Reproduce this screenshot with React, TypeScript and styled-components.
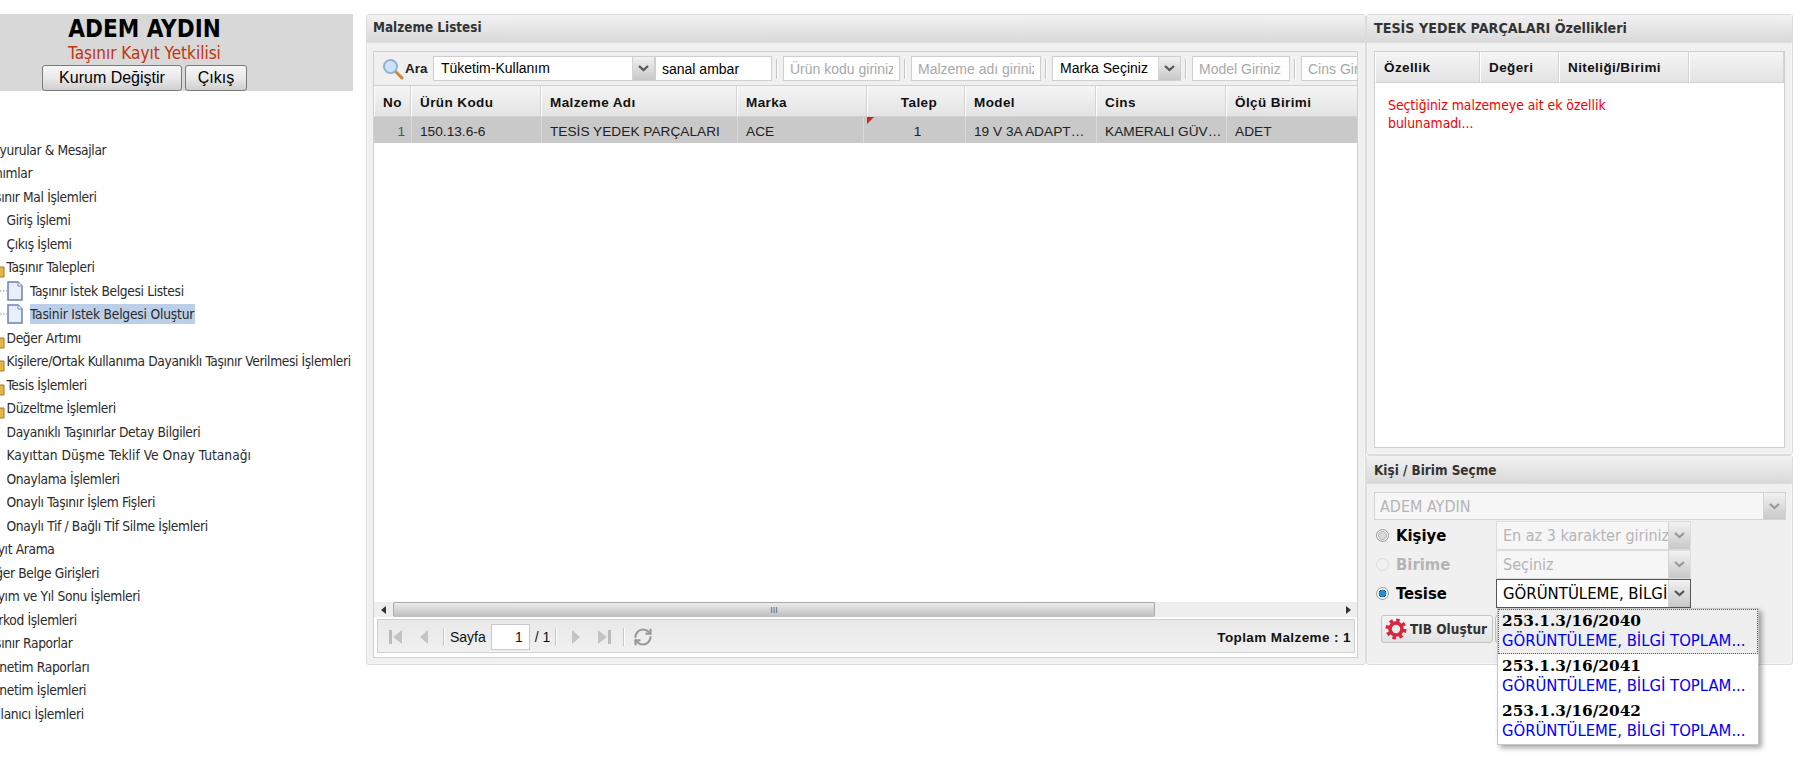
import React from "react";
import styled, { createGlobalStyle } from "styled-components";
import { RefreshCw } from "lucide-react";

const Global = createGlobalStyle`
  html, body { margin: 0; padding: 0; background: #fff; overflow: hidden; }
  * { box-sizing: border-box; }
`;
const tahoma = `"DejaVu Sans", "Noto Sans", sans-serif`;
const arial = `"Liberation Sans", Arial, sans-serif`;

const Page = styled.div`
  display: flex;
  width: 1803px;
  height: 771px;
  padding-top: 14px;
  overflow: hidden;
`;
const Aside = styled.aside`
  width: 353px;
  flex: none;
  overflow: hidden;
  margin-right: 13px;
`;
const UserCard = styled.div`
  height: 77px;
  background: #d8d8d8;
  padding-right: 64px;
  display: flex;
  flex-direction: column;
  align-items: center;
`;
const UserName = styled.div`
  font: bold 24px/28px ${tahoma};
  font-stretch: condensed;
  color: #000;
  margin-top: 1px;
`;
const UserRole = styled.div`
  font: 17px/20px ${tahoma};
  font-stretch: condensed;
  color: #c0330f;
`;
const UserActions = styled.div`
  display: flex;
  gap: 3px;
  margin-top: 2px;
`;
const PlainButton = styled.button<{ $w: number }>`
  width: ${(p) => p.$w}px;
  height: 26px;
  padding: 0;
  border: 1px solid #7a7a7a;
  border-radius: 3px;
  background: linear-gradient(#f6f6f6, #e9e9e9 50%, #cfcfcf);
  font: 16px ${arial};
  color: #000;
`;
const Tree = styled.div`
  margin-top: 47px;
`;
const Row = styled.div<{ $level: number; $track: number }>`
  height: 23.5px;
  display: flex;
  align-items: center;
  white-space: nowrap;
  margin-left: ${(p) => p.$level * 23.5 - 17}px;
  font: 13.7px/20px ${tahoma};
  font-stretch: condensed;
  letter-spacing: ${(p) => p.$track}px;
  color: #2b2b2b;
`;
const Label = styled.span<{ $selected?: boolean }>`
  padding-right: 1px;
  background: ${(p) => (p.$selected ? "#bccfe9" : "transparent")};
`;
const FolderSlot = styled.svg`
  flex: none;
  width: 18px;
  height: 16px;
  margin-left: -20px;
  margin-right: 2px;
  margin-top: 6px;
`;
const DocSlot = styled.svg`
  flex: none;
  width: 25px;
  height: 20px;
  margin-left: -30px;
  margin-right: 5px;
`;

const Panel = styled.section`
  display: flex;
  flex-direction: column;
  border: 1px solid #dcdcdc;
  border-radius: 3px;
  background: #f0f0f0;
  box-shadow: inset 0 0 0 1px #f5f5f5;
`;
const MainPanel = styled(Panel)`
  width: 1000px;
  height: 651px;
  flex: none;
  padding-bottom: 6px;
`;
const PanelHead = styled.header<{ $size?: number }>`
  height: 28px;
  flex: none;
  padding: 0 0 2px 6px;
  display: flex;
  align-items: center;
  background: linear-gradient(#f2f2f2, #d9d9d9);
  border-bottom: 1px solid #dcdcdc;
  font: bold ${(p) => p.$size ?? 13.4}px ${tahoma};
  font-stretch: condensed;
  color: #333;
`;
const AttrHead = styled(PanelHead)`
  padding-left: 7px;
`;
const PickHead = styled(PanelHead)`
  padding: 2px 0 0 7px;
`;
const GridBox = styled.div`
  flex: 1;
  margin: 8px 7px 0 6px;
  border: 1px solid #d0d0d0;
  background: #fff;
  display: flex;
  flex-direction: column;
  overflow: hidden;
`;
const Toolbar = styled.div`
  height: 34px;
  flex: none;
  background: #f0f0f0;
  border-bottom: 1px solid #d0d0d0;
  display: flex;
  align-items: center;
  padding-left: 8px;
  overflow: hidden;
`;
const SearchIcon = styled.svg`
  flex: none;
  width: 22px;
  height: 22px;
`;
const SearchLabel = styled.span`
  flex: none;
  width: 29px;
  padding-left: 1px;
  font: bold 13.5px ${arial};
  color: #222;
`;
const Field = styled.input<{ $w: number }>`
  width: ${(p) => p.$w}px;
  height: 25px;
  flex: none;
  border: 1px solid #cfcfcf;
  padding: 0 6px;
  margin: 0;
  background: #fff;
  outline: none;
  font: 14px ${arial};
  color: #000;
  &::placeholder { color: #a8a8a8; opacity: 1; }
`;
const Combo = styled.div<{ $w: number }>`
  position: relative;
  width: ${(p) => p.$w}px;
  height: 25px;
  flex: none;
  display: flex;
  border: 1px solid #cfcfcf;
  background: #fff;
  font: 14px/23px ${arial};
  color: #000;
  padding-left: 7px;
  justify-content: space-between;
`;
const Trigger = styled.span`
  width: 22px;
  flex: none;
  background: linear-gradient(#f2f2f2, #c8c8c8);
  border-left: 1px solid #d4d4d4;
  display: flex;
  align-items: center;
  justify-content: center;
`;
const Sep = styled.span`
  flex: none;
  width: 2px;
  height: 20px;
  background: #c6c6c6;
  border-right: 1px solid #fff;
  margin: 0 5px 0 4px;
`;
const Columns = styled.div<{ $cols: string; $h: number }>`
  display: grid;
  grid-template-columns: ${(p) => p.$cols};
  height: ${(p) => p.$h}px;
  flex: none;
`;
const HeadCell = styled.div<{ $center?: boolean; $shift?: number }>`
  display: flex;
  align-items: center;
  justify-content: ${(p) => (p.$center ? "center" : "flex-start")};
  padding: 3px 0 0 ${(p) => p.$shift ?? (p.$center ? 0 : 8)}px;
  background: linear-gradient(#f5f5f5, #e3e3e3);
  border-right: 1px solid #d4d4d4;
  border-left: 1px solid #fff;
  border-bottom: 1px solid #d0d0d0;
  font: bold 13.5px ${arial};
  letter-spacing: 0.4px;
  color: #111;
`;
const AttrHeadCell = styled(HeadCell)`
  padding-top: 0;
`;
const Cell = styled.div<{ $center?: boolean; $right?: boolean }>`
  position: relative;
  display: flex;
  align-items: center;
  justify-content: ${(p) => (p.$center ? "center" : p.$right ? "flex-end" : "flex-start")};
  padding: ${(p) => (p.$right ? "2px 6px 0 0" : p.$center ? "2px 0 0 6px" : "2px 0 0 8px")};
  overflow: hidden;
  background: #c9c9c9;
  border-right: 1px solid #dadada;
  font: 13.7px ${arial};
  color: ${(p) => (p.$right ? "#555" : "#222")};
  white-space: nowrap;
`;
const Dirty = styled.i`
  position: absolute;
  left: 3px;
  top: 0;
  width: 0;
  height: 0;
  border-top: 7px solid #d0202a;
  border-right: 7px solid transparent;
`;
const Empty = styled.div`
  flex: 1;
  background: #fff;
`;
const HScroll = styled.div`
  height: 15px;
  flex: none;
  background: #eeeeee;
  display: flex;
  align-items: stretch;
  margin-bottom: 2px;
`;
const ScrollEnd = styled.div`
  width: 19px;
  flex: none;
  display: flex;
  align-items: center;
  justify-content: center;
`;
const ScrollThumb = styled.div`
  width: 762px;
  flex: none;
  background: linear-gradient(#ececec, #bcbcbc);
  border: 1px solid #a8a8a8;
  border-bottom: 0;
  border-radius: 2px;
  display: flex;
  align-items: center;
  justify-content: center;
  font: 9px ${arial};
  color: #666;
`;
const ScrollRest = styled.div`
  flex: 1;
`;
const Pager = styled.div`
  height: 34px;
  flex: none;
  margin: 0 2px 4px 3px;
  border: 1px solid #d0d0d0;
  background: linear-gradient(#e9e9e9, #f0f0f0);
  display: flex;
  align-items: center;
  padding: 2px 3px 0 4px;
  font: 14px ${arial};
  color: #111;
`;
const PagerSep = styled.span<{ $gap?: number }>`
  flex: none;
  width: 2px;
  height: 18px;
  background: #c6c6c6;
  border-right: 1px solid #fff;
  margin: 0 ${(p) => p.$gap ?? 5}px 0 5px;
`;
const PageIcon = styled.svg`
  flex: none;
  width: 16px;
  height: 16px;
  margin: 0 6px;
`;
const PageInput = styled.input`
  width: 39px;
  height: 26px;
  margin: 0 5px 0 5px;
  padding: 0 6px;
  border: 1px solid #c8c8c8;
  outline: none;
  background: #fff;
  text-align: right;
  font: 14px ${arial};
  color: #111;
`;
const Total = styled.span`
  margin-left: auto;
  font: bold 13.5px ${arial};
  letter-spacing: 0.4px;
  color: #111;
`;

const RightColumn = styled.div`
  width: 427px;
  height: 651px;
  flex: none;
  display: flex;
  flex-direction: column;
`;
const AttrPanel = styled(Panel)`
  height: 441px;
  flex: none;
`;
const AttrBox = styled(GridBox)`
  margin: 8px 7px 6px 7px;
`;
const AttrMessage = styled.div`
  padding: 13px 0 0 13px;
  font: 13.8px/18px ${tahoma};
  font-stretch: condensed;
  color: #f00000;
`;
const PickPanel = styled(Panel)`
  flex: 1;
`;
const PickBody = styled.div`
  flex: 1;
  padding: 8px 6px 0 7px;
`;
const WideSelect = styled(Combo)`
  width: 412px;
  height: 28px;
  margin-bottom: 1px;
  background: #f6f6f6;
  border-color: #d4d4d4;
  font: 16px/28px ${tahoma};
  font-stretch: condensed;
  color: #b5b5b5;
  padding-left: 5px;
`;
const ChoiceRow = styled.div`
  display: flex;
  align-items: center;
  height: 29px;
`;
const Radio = styled.span<{ $on?: boolean; $off?: boolean }>`
  flex: none;
  width: 13px;
  height: 13px;
  margin-left: 2px;
  border-radius: 50%;
  border: 1px solid ${(p) => (p.$off ? "#dcdcdc" : "#9a9a9a")};
  background: ${(p) =>
    p.$on
      ? "radial-gradient(circle, #2a8fd0 0 3px, #10456e 3.6px, #fff 4.2px, #e8e8e8 100%)"
      : p.$off
      ? "#f0f0f0"
      : "radial-gradient(circle, #d8d8d8 0 3px, #bdbdbd 4px, #f6f6f6 5px)"};
`;
const ChoiceLabel = styled.span<{ $off?: boolean }>`
  width: 107px;
  flex: none;
  padding-left: 7px;
  font: bold 16.5px ${tahoma};
  font-stretch: condensed;
  color: ${(p) => (p.$off ? "#b5b5b5" : "#000")};
`;
const ChoiceCombo = styled.div<{ $active?: boolean }>`
  position: relative;
  width: 195px;
  height: 29px;
  flex: none;
  display: flex;
  border: 1px solid ${(p) => (p.$active ? "#555" : "#dcdcdc")};
  background: ${(p) => (p.$active ? "#fff" : "#f6f6f6")};
`;
const ChoiceInput = styled.input<{ $active?: boolean }>`
  flex: 1;
  min-width: 0;
  border: 0;
  outline: none;
  background: transparent;
  padding: 0 0 0 6px;
  font: ${(p) => (p.$active ? 16.6 : 16)}px ${tahoma};
  font-stretch: condensed;
  color: ${(p) => (p.$active ? "#000" : "#b5b5b5")};
  &::placeholder { color: #b5b5b5; opacity: 1; }
`;
const Dropdown = styled.div`
  position: absolute;
  left: 0;
  top: 28px;
  width: 262px;
  background: #fff;
  border: 1px solid #c8c8c8;
  box-shadow: 3px 3px 5px rgba(0, 0, 0, 0.35);
  z-index: 5;
`;
const DropItem = styled.div<{ $active?: boolean }>`
  height: 45px;
  padding: 2px 0 0 4px;
  background: ${(p) => (p.$active ? "#eeeeee" : "#fff")};
  outline: ${(p) => (p.$active ? "1px dotted #555" : "none")};
  outline-offset: -1px;
`;
const DropCode = styled.div`
  font: bold 15.3px/20px "DejaVu Serif", "Liberation Serif", serif;
  color: #000;
`;
const DropName = styled.div`
  font: 16.5px/19px ${tahoma};
  font-stretch: condensed;
  color: #0000f0;
  white-space: nowrap;
`;
const ActionRow = styled.div`
  display: flex;
  gap: 2px;
  margin: 7px 0 0 7px;
`;
const IconButton = styled.button<{ $w: number }>`
  width: ${(p) => p.$w}px;
  height: 28px;
  padding: 0 0 0 3px;
  display: flex;
  align-items: center;
  gap: 3px;
  border: 1px solid #c4c4c4;
  border-radius: 3px;
  background: linear-gradient(#f6f6f6, #e2e2e2);
  font: bold 13.5px ${tahoma};
  font-stretch: condensed;
  color: #333;
  white-space: nowrap;
  overflow: hidden;
`;

const Chevron = ({ light }: { light?: boolean }) => (
  <svg width="11" height="7" viewBox="0 0 11 7">
    <polyline points="1,1 5.5,5 10,1" fill="none" stroke={light ? "#999" : "#555"} strokeWidth="2.2" />
  </svg>
);
const Folder = () => (
  <FolderSlot viewBox="0 0 18 16">
    <path d="M1 3h6l2 2h8v10H1z" fill="#e3b54a" stroke="#a9791c" />
  </FolderSlot>
);
const Doc = () => (
  <DocSlot viewBox="0 0 25 20">
    <line x1="0" y1="10" x2="7" y2="10" stroke="#999" strokeDasharray="1.5 1.5" />
    <path d="M8 1h10l4 4v14H8z" fill="#e6effb" stroke="#6f83ae" strokeWidth="1.5" />
    <path d="M18 1v4h4" fill="#fff" stroke="#6f83ae" />
  </DocSlot>
);
const Magnifier = () => (
  <SearchIcon viewBox="0 0 22 22">
    <line x1="13" y1="13" x2="20" y2="20" stroke="#c98a3b" strokeWidth="3" strokeLinecap="round" />
    <circle cx="8.5" cy="8.5" r="6.5" fill="#cfe3f7" stroke="#8fb2d3" strokeWidth="2" />
  </SearchIcon>
);
const Gear = () => (
  <svg width="22" height="22" viewBox="0 0 22 22">
    <circle cx="11" cy="11" r="8.8" fill="none" stroke="#d8263c" strokeWidth="3.4" strokeDasharray="3.45 3.46" />
    <circle cx="11" cy="11" r="6" fill="none" stroke="#d8263c" strokeWidth="3.6" />
  </svg>
);

type Node = { level: number; text: string; kind?: "folder" | "doc" | "selected"; track?: number };
const tree: Node[] = [
  { level: 0, text: "Duyurular & Mesajlar" },
  { level: 0, text: "Tanımlar" },
  { level: 0, text: "Taşınır Mal İşlemleri" },
  { level: 1, text: "Giriş İşlemi" },
  { level: 1, text: "Çıkış İşlemi" },
  { level: 1, text: "Taşınır Talepleri", kind: "folder" },
  { level: 2, text: "Taşınır İstek Belgesi Listesi", kind: "doc" },
  { level: 2, text: "Tasinir Istek Belgesi Oluştur", kind: "selected", track: -0.2 },
  { level: 1, text: "Değer Artımı", kind: "folder" },
  { level: 1, text: "Kişilere/Ortak Kullanıma Dayanıklı Taşınır Verilmesi İşlemleri", kind: "folder", track: -0.38 },
  { level: 1, text: "Tesis İşlemleri", kind: "folder" },
  { level: 1, text: "Düzeltme İşlemleri", kind: "folder" },
  { level: 1, text: "Dayanıklı Taşınırlar Detay Bilgileri" },
  { level: 1, text: "Kayıttan Düşme Teklif Ve Onay Tutanağı", track: 0 },
  { level: 1, text: "Onaylama İşlemleri" },
  { level: 1, text: "Onaylı Taşınır İşlem Fişleri" },
  { level: 1, text: "Onaylı Tif / Bağlı Tİf Silme İşlemleri" },
  { level: 0, text: "Kayıt Arama" },
  { level: 0, text: "Diğer Belge Girişleri" },
  { level: 0, text: "Sayım ve Yıl Sonu İşlemleri" },
  { level: 0, text: "Barkod İşlemleri" },
  { level: 0, text: "Taşınır Raporlar" },
  { level: 0, text: "Denetim Raporları" },
  { level: 0, text: "Denetim İşlemleri" },
  { level: 0, text: "Kullanıcı İşlemleri" },
];

const headCols = "37px 130px 196px 130px 98px 131px 130px 132px";
const rowCols = "38px 130px 196px 126px 102px 131px 130px 131px";

export default function App() {
  return (
    <Page>
      <Global />
      <Aside>
        <UserCard>
          <UserName>ADEM AYDIN</UserName>
          <UserRole>Taşınır Kayıt Yetkilisi</UserRole>
          <UserActions>
            <PlainButton $w={140}>Kurum Değiştir</PlainButton>
            <PlainButton $w={62}>Çıkış</PlainButton>
          </UserActions>
        </UserCard>
        <Tree>
          {tree.map(({ level, text, kind, track }) => (
            <Row key={text} $level={level} $track={track ?? -0.35}>
              {kind === "folder" && <Folder />}
              {(kind === "doc" || kind === "selected") && <Doc />}
              <Label $selected={kind === "selected"}>{text}</Label>
            </Row>
          ))}
        </Tree>
      </Aside>

      <MainPanel>
        <PanelHead>Malzeme Listesi</PanelHead>
        <GridBox>
          <Toolbar>
            <Magnifier />
            <SearchLabel>Ara</SearchLabel>
            <Combo $w={222}>
              Tüketim-Kullanım
              <Trigger><Chevron /></Trigger>
            </Combo>
            <Field $w={117} readOnly value="sanal ambar" />
            <Sep />
            <Field $w={117} placeholder="Ürün kodu giriniz" />
            <Sep />
            <Field $w={130} placeholder="Malzeme adı giriniz" />
            <Sep />
            <Combo $w={129}>
              Marka Seçiniz
              <Trigger><Chevron /></Trigger>
            </Combo>
            <Sep />
            <Field $w={98} placeholder="Model Giriniz" />
            <Sep />
            <Field $w={98} placeholder="Cins Giriniz" />
          </Toolbar>
          <Columns $cols={headCols} $h={31}>
            <HeadCell $center>No</HeadCell>
            <HeadCell>Ürün Kodu</HeadCell>
            <HeadCell>Malzeme Adı</HeadCell>
            <HeadCell>Marka</HeadCell>
            <HeadCell $center $shift={6}>Talep</HeadCell>
            <HeadCell>Model</HeadCell>
            <HeadCell>Cins</HeadCell>
            <HeadCell>Ölçü Birimi</HeadCell>
          </Columns>
          <Columns $cols={rowCols} $h={26}>
            <Cell $right>1</Cell>
            <Cell>150.13.6-6</Cell>
            <Cell>TESİS YEDEK PARÇALARI</Cell>
            <Cell>ACE</Cell>
            <Cell $center><Dirty />1</Cell>
            <Cell>19 V 3A ADAPT…</Cell>
            <Cell>KAMERALI GÜV…</Cell>
            <Cell>ADET</Cell>
          </Columns>
          <Empty />
          <HScroll>
            <ScrollEnd>
              <svg width="6" height="8" viewBox="0 0 6 8"><path d="M5 0v8L0 4z" fill="#333" /></svg>
            </ScrollEnd>
            <ScrollThumb>III</ScrollThumb>
            <ScrollRest />
            <ScrollEnd>
              <svg width="6" height="8" viewBox="0 0 6 8"><path d="M1 0v8l5-4z" fill="#333" /></svg>
            </ScrollEnd>
          </HScroll>
          <Pager>
            <PageIcon viewBox="0 0 16 16">
              <rect x="1" y="1" width="3" height="14" fill="#bbb" />
              <path d="M14 1v14L5 8z" fill="#c4c4c4" />
            </PageIcon>
            <PageIcon viewBox="0 0 16 16"><path d="M12 1v14L4 8z" fill="#c4c4c4" /></PageIcon>
            <PagerSep />
            Sayfa
            <PageInput readOnly value="1" />
            / 1
            <PagerSep />
            <PageIcon viewBox="0 0 16 16"><path d="M4 1v14l8-7z" fill="#c4c4c4" /></PageIcon>
            <PageIcon viewBox="0 0 16 16">
              <path d="M2 1v14l9-7z" fill="#c4c4c4" />
              <rect x="12" y="1" width="3" height="14" fill="#bbb" />
            </PageIcon>
            <PagerSep $gap={8} />
            <RefreshCw size={20} color="#9a9a9a" strokeWidth={2.6} />
            <Total>Toplam Malzeme : 1</Total>
          </Pager>
        </GridBox>
      </MainPanel>

      <RightColumn>
        <AttrPanel>
          <AttrHead $size={14.2}>TESİS YEDEK PARÇALARI Özellikleri</AttrHead>
          <AttrBox>
            <Columns $cols="105px 79px 130px 1fr" $h={31}>
              <AttrHeadCell>Özellik</AttrHeadCell>
              <AttrHeadCell>Değeri</AttrHeadCell>
              <AttrHeadCell>Niteliği/Birimi</AttrHeadCell>
              <AttrHeadCell />
            </Columns>
            <AttrMessage>
              Seçtiğiniz malzemeye ait ek özellik
              <br />
              bulunamadı...
            </AttrMessage>
          </AttrBox>
        </AttrPanel>
        <PickPanel>
          <PickHead>Kişi / Birim Seçme</PickHead>
          <PickBody>
            <WideSelect $w={412}>
              ADEM AYDIN
              <Trigger><Chevron light /></Trigger>
            </WideSelect>
            <ChoiceRow>
              <Radio />
              <ChoiceLabel>Kişiye</ChoiceLabel>
              <ChoiceCombo>
                <ChoiceInput placeholder="En az 3 karakter giriniz" />
                <Trigger><Chevron light /></Trigger>
              </ChoiceCombo>
            </ChoiceRow>
            <ChoiceRow>
              <Radio $off />
              <ChoiceLabel $off>Birime</ChoiceLabel>
              <ChoiceCombo>
                <ChoiceInput placeholder="Seçiniz" />
                <Trigger><Chevron light /></Trigger>
              </ChoiceCombo>
            </ChoiceRow>
            <ChoiceRow>
              <Radio $on />
              <ChoiceLabel>Tesise</ChoiceLabel>
              <ChoiceCombo $active>
                <ChoiceInput $active readOnly value="GÖRÜNTÜLEME, BİLGİ TOPLAMA" />
                <Trigger><Chevron /></Trigger>
                <Dropdown>
                  {["2040", "2041", "2042"].map((n, i) => (
                    <DropItem key={n} $active={i === 0}>
                      <DropCode>253.1.3/16/{n}</DropCode>
                      <DropName>GÖRÜNTÜLEME, BİLGİ TOPLAM...</DropName>
                    </DropItem>
                  ))}
                </Dropdown>
              </ChoiceCombo>
            </ChoiceRow>
            <ActionRow>
              <IconButton $w={112}><Gear />TIB Oluştur</IconButton>
              <IconButton $w={20} />
            </ActionRow>
          </PickBody>
        </PickPanel>
      </RightColumn>
    </Page>
  );
}
